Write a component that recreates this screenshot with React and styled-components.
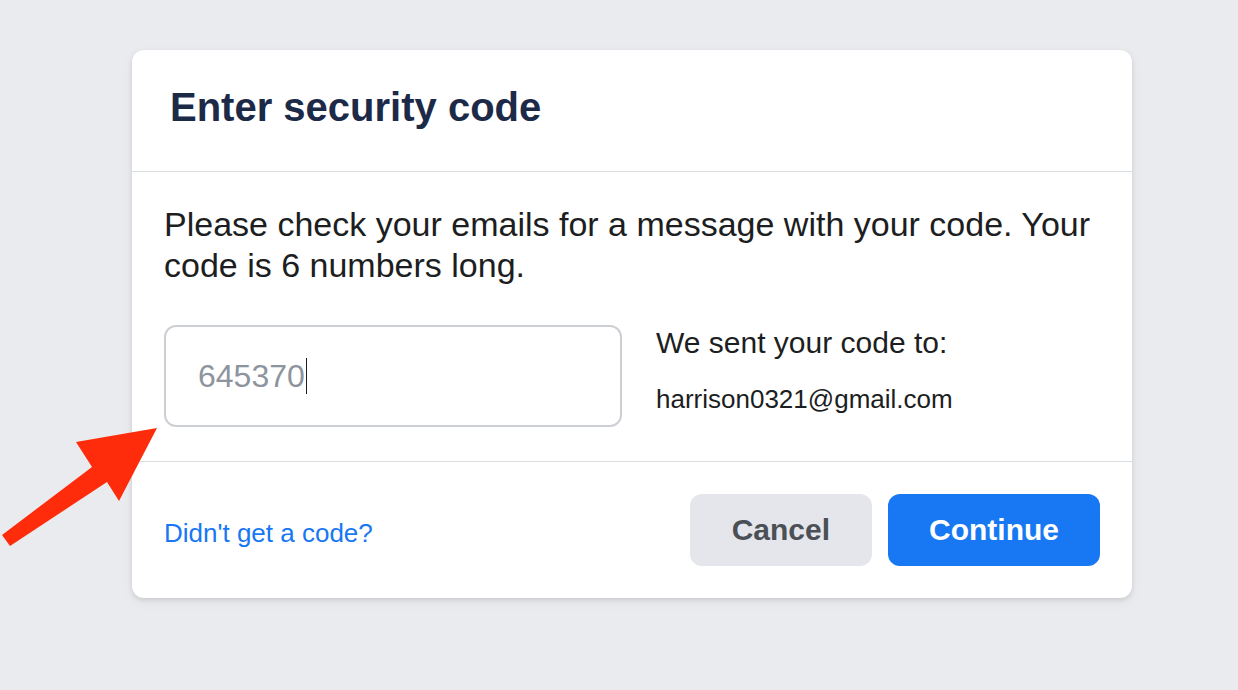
import styled, { createGlobalStyle } from "styled-components";

const GlobalStyle = createGlobalStyle`
  html, body {
    margin: 0;
    padding: 0;
    background-color: #e9ebee;
  }

  body {
    font-family: "Liberation Sans", Arial, Helvetica, sans-serif;
    color: #1c1e21;
  }
`;

const Page = styled.main`
  position: relative;
  min-height: 690px;
  padding: 50px 0 0 132px;
  box-sizing: border-box;
`;

const Card = styled.section`
  width: 1000px;
  background-color: #fff;
  border-radius: 12px;
  box-shadow: 0 2px 4px rgba(0, 0, 0, 0.1), 0 4px 12px rgba(0, 0, 0, 0.05);
  overflow: hidden;
`;

const Header = styled.header`
  box-sizing: border-box;
  height: 122px;
  padding: 33px 36px 0 38px;
  border-bottom: 1px solid #dadde1;
`;

const Title = styled.h2`
  margin: 0;
  font-size: 40px;
  line-height: 48px;
  font-weight: 700;
  color: #1c2a48;
`;

const Body = styled.div`
  padding: 32px 32px 34px 32px;
  border-bottom: 1px solid #dadde1;
`;

const Text = styled.p`
  margin: 0 0 39px;
  font-size: 34px;
  line-height: 41px;
  color: #1c1e21;
`;

const CodeRow = styled.div`
  display: flex;
  align-items: flex-start;
  gap: 34px;
`;

const CodeField = styled.div`
  box-sizing: border-box;
  width: 458px;
  height: 102px;
  display: flex;
  align-items: center;
  padding-left: 32px;
  border: 2px solid #ccd0d5;
  border-radius: 12px;
  font-size: 32px;
  color: #8d949e;
`;

const Caret = styled.span`
  display: inline-block;
  width: 1.5px;
  height: 36px;
  margin-left: 1px;
  background-color: #1c1e21;
`;

const SentTo = styled.div`
  display: flex;
  flex-direction: column;
  gap: 22px;
`;

const SentLabel = styled.span`
  font-size: 30px;
  line-height: 36px;
  color: #1c1e21;
`;

const Email = styled.span`
  font-size: 26px;
  line-height: 32px;
  color: #1c1e21;
`;

const Footer = styled.footer`
  display: flex;
  align-items: center;
  justify-content: space-between;
  padding: 32px 32px;
`;

const HelpLink = styled.a`
  margin-top: 7px;
  font-size: 26px;
  color: #1877f2;
  text-decoration: none;
  cursor: pointer;
`;

const Actions = styled.div`
  display: flex;
  gap: 16px;
`;

const Button = styled.button`
  height: 72px;
  padding: 0 ${({ $wide }) => ($wide ? "41px" : "42px")};
  border: none;
  border-radius: 12px;
  font-family: inherit;
  font-size: 30px;
  font-weight: 700;
  cursor: pointer;
  background-color: ${({ $primary }) => ($primary ? "#1877f2" : "#e4e6eb")};
  color: ${({ $primary }) => ($primary ? "#fff" : "#4b4f56")};
`;

const Arrow = styled.svg`
  position: absolute;
  left: 0;
  top: 420px;
  width: 170px;
  height: 140px;
  pointer-events: none;
`;

export default function App() {
  return (
    <>
      <GlobalStyle />
      <Page>
        <Card>
          <Header>
            <Title>Enter security code</Title>
          </Header>
          <Body>
            <Text>
              Please check your emails for a message with your code. Your
              code is 6 numbers long.
            </Text>
            <CodeRow>
              <CodeField>
                645370
                <Caret />
              </CodeField>
              <SentTo>
                <SentLabel>We sent your code to:</SentLabel>
                <Email>harrison0321@gmail.com</Email>
              </SentTo>
            </CodeRow>
          </Body>
          <Footer>
            <HelpLink>Didn't get a code?</HelpLink>
            <Actions>
              <Button>Cancel</Button>
              <Button $primary $wide>
                Continue
              </Button>
            </Actions>
          </Footer>
        </Card>
        <Arrow viewBox="0 420 170 140">
          <polygon
            points="2,535 10,546 107,482 119,501 157,428 76,442 92,467"
            fill="#fe2c0a"
          />
        </Arrow>
      </Page>
    </>
  );
}
